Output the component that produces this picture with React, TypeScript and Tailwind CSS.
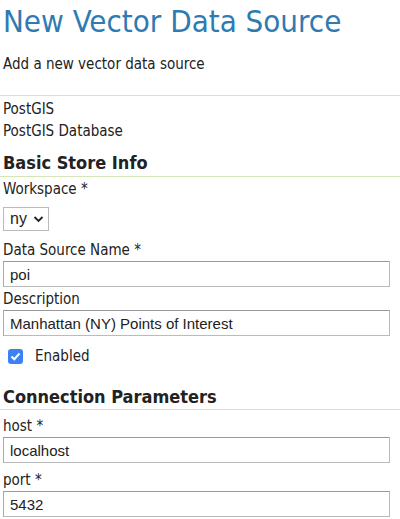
import React from "react";

const lbl = "text-[15px] leading-[22px] text-[#222]";
const inp =
  "block w-[387px] h-[26px] ml-[3px] px-[6px] text-[15px] text-[#222] bg-white border border-[#bbb] border-t-[#999] border-l-[#aaa] outline-none";
const sans = { fontFamily: '"Liberation Sans", Arial, sans-serif' };

export default function App() {
  return (
    <div
      className="w-[400px] h-[519px] overflow-hidden bg-white"
      style={{ fontFamily: '"DejaVu Sans Condensed", "DejaVu Sans", Verdana, sans-serif' }}
    >
      <h1 className="pl-[3px] pt-[2px] text-[31px] leading-[38px] text-[#2f7bb1]">
        New Vector Data Source
      </h1>
      <p className={`pl-[3px] mt-[13px] ${lbl}`}>Add a new vector data source</p>
      <div className="mt-[20px] border-t border-[#d4e6b8]" />
      <div className="pl-[3px] pt-[2px]">
        <div className={lbl}>PostGIS</div>
        <div className={lbl}>PostGIS Database</div>
      </div>
      <h2 className="pl-[3px] mt-[9px] text-[18px] leading-[24px] font-bold text-[#222]">
        Basic Store Info
      </h2>
      <div className="mt-[1px] border-t border-[#d4e6b8]" />
      <div className={`pl-[3px] mt-[1px] ${lbl}`}>Workspace *</div>
      <div className="ml-[3px] mt-[7px] w-[46px] h-[24px] border border-[#bbb] flex items-center pl-[6px] gap-[6px]">
        <span className="text-[16px] text-[#222]" style={sans}>ny</span>
        <svg width="11" height="8" viewBox="0 0 11 8">
          <path d="M1.5 2 L5.5 6 L9.5 2" fill="none" stroke="#222" strokeWidth="1.8" />
        </svg>
      </div>
      <div className={`pl-[3px] mt-[8px] ${lbl}`}>Data Source Name *</div>
      <input className={inp} style={sans} defaultValue="poi" readOnly />
      <div className={`pl-[3px] mt-[1px] ${lbl}`}>Description</div>
      <input className={inp} style={sans} defaultValue="Manhattan (NY) Points of Interest" readOnly />
      <div className="flex items-center mt-[9px] pl-[8px] gap-[12px]">
        <span className="w-[15px] h-[15px] rounded-[3px] bg-[#3b82f6] flex items-center justify-center">
          <svg width="11" height="9" viewBox="0 0 11 9">
            <path d="M1.5 4.5 L4.3 7.2 L9.5 1.5" fill="none" stroke="white" strokeWidth="2" />
          </svg>
        </span>
        <span className={lbl}>Enabled</span>
      </div>
      <h2 className="pl-[3px] mt-[18px] text-[18px] leading-[24px] font-bold text-[#222]">
        Connection Parameters
      </h2>
      <div className="border-t border-[#d4e6b8]" />
      <div className={`pl-[3px] mt-[5px] ${lbl}`}>host *</div>
      <input className={inp} style={sans} defaultValue="localhost" readOnly />
      <div className={`pl-[3px] mt-[6px] ${lbl}`}>port *</div>
      <input className={inp} style={sans} defaultValue="5432" readOnly />
    </div>
  );
}
